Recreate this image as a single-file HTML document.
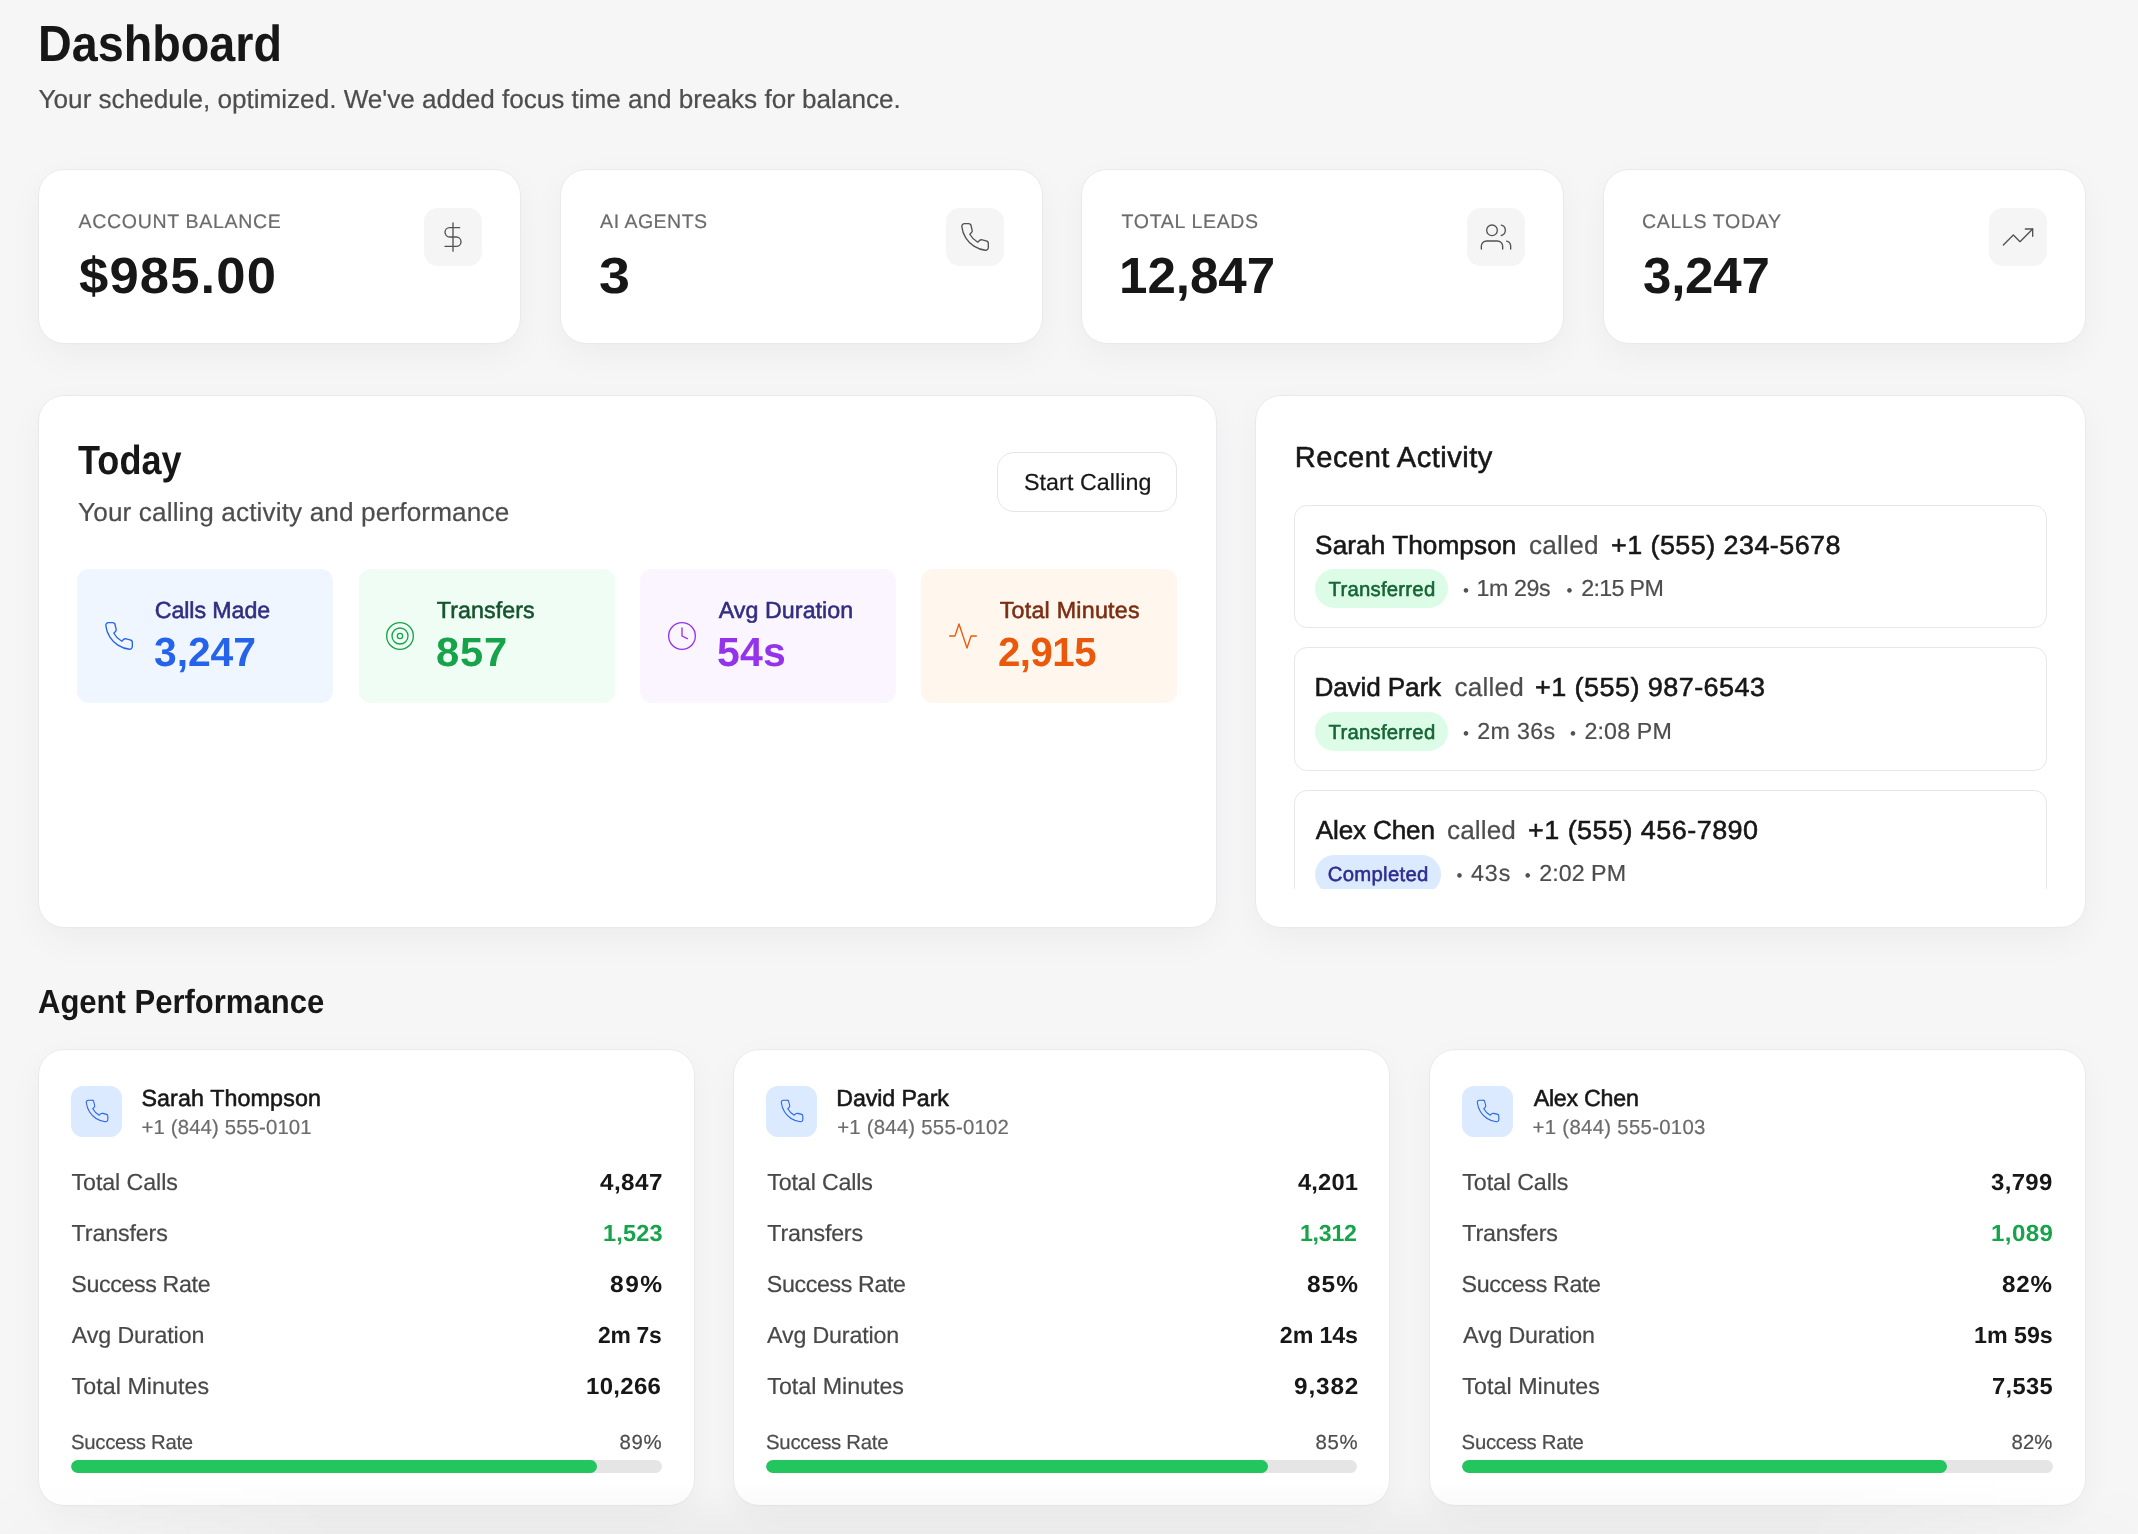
<!DOCTYPE html>
<html lang="en">
<head>
<meta charset="utf-8">
<title>Dashboard</title>
<style>
*{box-sizing:border-box;margin:0;padding:0}
html,body{width:2138px;height:1534px;overflow:hidden}
body{will-change:transform;text-rendering:geometricPrecision;position:relative;background:#f6f6f6;color:#171717;font-family:"Liberation Sans",Arial,sans-serif}
section,div,svg,.t{position:absolute}
.t{display:block;white-space:nowrap;line-height:1;font-weight:400;transform-origin:0 50%;-webkit-text-stroke:.2px currentColor}
.md{-webkit-text-stroke:.55px currentColor}
.b{font-weight:700;-webkit-text-stroke:0}
.f48{font-size:50.74px}.f38{font-size:40.69px}.f32{font-size:33.61px}.f28{font-size:29.07px}
.f25{font-size:26.16px}.f22{font-size:23.25px}.f19{font-size:20.35px}.f18{font-size:19.55px}
.dot{font-size:17px;color:#525252;-webkit-text-stroke:0}
.g4{color:#484848}.g5{color:#4d4d4d}.g6{color:#6b6b6b}.gr{color:#16a34a}
svg{fill:none;stroke:currentColor;stroke-width:1;stroke-linecap:round;stroke-linejoin:round;overflow:visible}
.card{background:#fff;border:1px solid #e9e9eb;border-radius:26px;box-shadow:0 1px 2px rgba(0,0,0,.015),0 12px 36px rgba(0,0,0,.038)}
.ib{border-radius:14px;background:#f5f5f5;color:#525252}
.btn{border:1px solid #e5e5e5;border-radius:17px;background:#fff}
.mini{border-radius:12px}
.m1{background:#eff6ff;color:#2563eb}.m1 .ml{color:#312e81}
.m2{background:#f0fdf4;color:#16a34a}.m2 .ml{color:#14532d}
.m3{background:#faf5ff;color:#9333ea}.m3 .ml{color:#312e81}
.m4{background:#fff7ed;color:#ea580c}.m4 .ml{color:#7c2d12}
.list{overflow:hidden}
.item{border:1px solid #e7e7e9;border-radius:13px;background:#fff}
.badge{border-radius:20px}
.bg{background:#dcfce7;color:#166534}
.bb{background:#dbeafe;color:#2f2c8f}
.ab{border-radius:12px;background:#dbeafe;color:#2563eb}
.bar{border-radius:7px;background:#e5e5e5;overflow:hidden}
.bar i{display:block;height:100%;border-radius:7px;background:#22c55e}
.fade{left:0;top:1480px;width:2138px;height:54px;background:linear-gradient(rgba(0,0,0,0),rgba(0,0,0,.04));-webkit-mask-image:linear-gradient(90deg,rgba(0,0,0,.15),#000 16%,#000 84%,rgba(0,0,0,.15));mask-image:linear-gradient(90deg,rgba(0,0,0,.15),#000 16%,#000 84%,rgba(0,0,0,.15))}
</style>
</head>
<body>
<h1 class="t f48 b" style="left:37.56px;top:19px;transform:scaleX(0.921);">Dashboard</h1>
<p class="t f25 g5" style="left:38.59px;top:86px;letter-spacing:-.03px;">Your schedule, optimized. We've added focus time and breaks for balance.</p>
<section class="card" style="left:38px;top:169px;width:483px;height:175px;">
  <span class="t f18 g6" style="left:39.49px;top:43px;letter-spacing:.68px;">ACCOUNT BALANCE</span>
  <span class="t f48 b" style="left:40px;top:81px;letter-spacing:1.09px;transform:scaleX(1.037);">$985.00</span>
  <div class="ib" style="left:385px;top:38px;width:58px;height:58px;">
    <svg style="left:13px;top:13px;width:32px;height:32px" viewBox="0 0 24 24"><line x1="12" y1="1.4" x2="12" y2="22.6"/><path d="M17 5H9.5a3.5 3.5 0 0 0 0 7h5a3.5 3.5 0 0 1 0 7H6"/></svg>
  </div>
</section>
<section class="card" style="left:560px;top:169px;width:483px;height:175px;">
  <span class="t f18 g6" style="left:39.11px;top:43px;letter-spacing:.49px;">AI AGENTS</span>
  <span class="t f48 b" style="left:37.5px;top:81px;transform:scaleX(1.099);">3</span>
  <div class="ib" style="left:385px;top:38px;width:58px;height:58px;">
    <svg style="left:13px;top:13px;width:32px;height:32px" viewBox="0 0 24 24"><path d="M22 16.92v3a2 2 0 0 1-2.18 2 19.79 19.79 0 0 1-8.63-3.07 19.5 19.5 0 0 1-6-6 19.79 19.79 0 0 1-3.07-8.67A2 2 0 0 1 4.11 2h3a2 2 0 0 1 2 1.72 12.84 12.84 0 0 0 .7 2.81 2 2 0 0 1-.45 2.11L8.09 9.91a16 16 0 0 0 6 6l1.27-1.27a2 2 0 0 1 2.11-.45 12.84 12.84 0 0 0 2.81.7A2 2 0 0 1 22 16.92z"/></svg>
  </div>
</section>
<section class="card" style="left:1081px;top:169px;width:483px;height:175px;">
  <span class="t f18 g6" style="left:39.57px;top:43px;letter-spacing:.67px;">TOTAL LEADS</span>
  <span class="t f48 b" style="left:37.12px;top:81px;letter-spacing:-.06px;transform:scaleX(1.008);">12,847</span>
  <div class="ib" style="left:385px;top:38px;width:58px;height:58px;">
    <svg style="left:13px;top:13px;width:32px;height:32px" viewBox="0 0 24 24"><path d="M17 21v-2a4 4 0 0 0-4-4H5a4 4 0 0 0-4 4v2"/><circle cx="9" cy="7" r="4"/><path d="M23 21v-2a4 4 0 0 0-3-3.87"/><path d="M16 3.13a4 4 0 0 1 0 7.75"/></svg>
  </div>
</section>
<section class="card" style="left:1603px;top:169px;width:483px;height:175px;">
  <span class="t f18 g6" style="left:38px;top:43px;letter-spacing:.65px;">CALLS TODAY</span>
  <span class="t f48 b" style="left:38.98px;top:81px;letter-spacing:-.22px;transform:scaleX(1.006);">3,247</span>
  <div class="ib" style="left:385px;top:38px;width:58px;height:58px;">
    <svg style="left:13px;top:13px;width:32px;height:32px" viewBox="0 0 24 24"><polyline points="23 6 13.5 15.5 8.5 10.5 1 18"/><polyline points="17.5 6 23 6 23 11.5"/></svg>
  </div>
</section>
<section class="card" style="left:38px;top:395px;width:1179px;height:533px;">
  <h2 class="t f38 b" style="left:38.97px;top:44px;transform:scaleX(0.887);">Today</h2>
  <p class="t f25 g5" style="left:39.05px;top:103px;letter-spacing:.13px;">Your calling activity and performance</p>
  <div class="btn" style="left:958px;top:56px;width:180px;height:60px;">
    <span class="t f22" style="left:26.03px;top:18px;letter-spacing:.06px;">Start Calling</span>
  </div>
  <div class="mini m1" style="left:38px;top:173px;width:256px;height:134px;">
    <svg style="left:26.2px;top:51px;width:32px;height:32px" viewBox="0 0 24 24"><path d="M22 16.92v3a2 2 0 0 1-2.18 2 19.79 19.79 0 0 1-8.63-3.07 19.5 19.5 0 0 1-6-6 19.79 19.79 0 0 1-3.07-8.67A2 2 0 0 1 4.11 2h3a2 2 0 0 1 2 1.72 12.84 12.84 0 0 0 .7 2.81 2 2 0 0 1-.45 2.11L8.09 9.91a16 16 0 0 0 6 6l1.27-1.27a2 2 0 0 1 2.11-.45 12.84 12.84 0 0 0 2.81.7A2 2 0 0 1 22 16.92z"/></svg>
    <span class="t f22 md ml" style="left:77.79px;top:30px;letter-spacing:-.1px;">Calls Made</span>
    <span class="t f38 b" style="left:76.94px;top:63px;letter-spacing:-.07px;transform:scaleX(1.005);">3,247</span>
  </div>
  <div class="mini m2" style="left:320px;top:173px;width:256px;height:134px;">
    <svg style="left:25.1px;top:51px;width:32px;height:32px" viewBox="0 0 24 24"><circle cx="12" cy="12" r="10"/><circle cx="12" cy="12" r="6"/><circle cx="12" cy="12" r="2"/></svg>
    <span class="t f22 md ml" style="left:77.83px;top:30px;letter-spacing:.07px;">Transfers</span>
    <span class="t f38 b" style="left:76.65px;top:63px;letter-spacing:.79px;transform:scaleX(1.026);">857</span>
  </div>
  <div class="mini m3" style="left:601px;top:173px;width:256px;height:134px;">
    <svg style="left:26px;top:51px;width:32px;height:32px" viewBox="0 0 24 24"><circle cx="12" cy="12" r="10"/><polyline points="12 6 12 12 16 14"/></svg>
    <span class="t f22 md ml" style="left:78.72px;top:30px;letter-spacing:.05px;">Avg Duration</span>
    <span class="t f38 b" style="left:77.46px;top:63px;letter-spacing:.2px;transform:scaleX(1.008);">54s</span>
  </div>
  <div class="mini m4" style="left:882px;top:173px;width:256px;height:134px;">
    <svg style="left:26px;top:51px;width:32px;height:32px" viewBox="0 0 24 24"><polyline points="22 12 18 12 15 21 9 3 6 12 2 12"/></svg>
    <span class="t f22 md ml" style="left:78.63px;top:30px;letter-spacing:.25px;">Total Minutes</span>
    <span class="t f38 b" style="left:77.05px;top:63px;letter-spacing:-.54px;transform:scaleX(0.989);">2,915</span>
  </div>
</section>
<section class="card" style="left:1255px;top:395px;width:831px;height:533px;">
  <h2 class="t f28 md" style="left:38.86px;top:48px;letter-spacing:.49px;">Recent Activity</h2>
  <div class="list" style="left:38px;top:109px;width:753px;height:383.5px;">
    <div class="item" style="left:0px;top:0px;width:753px;height:123px;">
      <span class="t f25 md" style="left:20.12px;top:26px;letter-spacing:.08px;">Sarah Thompson</span>
      <span class="t f25 g5" style="left:233.98px;top:26px;letter-spacing:.23px;">called</span>
      <span class="t f25 md" style="left:315.82px;top:26px;letter-spacing:.43px;transform:scaleX(1.03);">+1 (555) 234-5678</span>
      <div class="badge bg" style="left:20px;top:63px;width:132.8px;height:39px;">
        <span class="t f19 md" style="left:13.62px;top:11px;letter-spacing:.22px;">Transferred</span>
      </div>
      <span class="t dot" style="left:168.12px;top:76px;">•</span>
      <span class="t f22 g5" style="left:181.44px;top:71px;letter-spacing:-.41px;">1m 29s</span>
      <span class="t dot" style="left:271.57px;top:76px;">•</span>
      <span class="t f22 g5" style="left:286.37px;top:71px;letter-spacing:-.69px;">2:15 PM</span>
    </div>
    <div class="item" style="left:0px;top:142px;width:753px;height:124px;">
      <span class="t f25 md" style="left:19.46px;top:26px;letter-spacing:-.14px;">David Park</span>
      <span class="t f25 g5" style="left:159.59px;top:26px;letter-spacing:.16px;">called</span>
      <span class="t f25 md" style="left:240.39px;top:26px;letter-spacing:.42px;transform:scaleX(1.033);">+1 (555) 987-6543</span>
      <div class="badge bg" style="left:20px;top:64px;width:132.8px;height:39px;">
        <span class="t f19 md" style="left:13.62px;top:11px;letter-spacing:.22px;">Transferred</span>
      </div>
      <span class="t dot" style="left:168.12px;top:77px;">•</span>
      <span class="t f22 g5" style="left:182.19px;top:72px;letter-spacing:.32px;">2m 36s</span>
      <span class="t dot" style="left:275.01px;top:77px;">•</span>
      <span class="t f22 g5" style="left:289.46px;top:72px;letter-spacing:.14px;">2:08 PM</span>
    </div>
    <div class="item" style="left:0px;top:285px;width:753px;height:123px;">
      <span class="t f25 md" style="left:20.77px;top:26px;letter-spacing:-.18px;">Alex Chen</span>
      <span class="t f25 g5" style="left:152.07px;top:26px;letter-spacing:.08px;">called</span>
      <span class="t f25 md" style="left:233.11px;top:26px;letter-spacing:.45px;transform:scaleX(1.031);">+1 (555) 456-7890</span>
      <div class="badge bb" style="left:20px;top:64px;width:125.7px;height:39px;">
        <span class="t f19 md" style="left:12.68px;top:10px;letter-spacing:.29px;">Completed</span>
      </div>
      <span class="t dot" style="left:161.57px;top:76px;">•</span>
      <span class="t f22 g5" style="left:175.94px;top:71px;letter-spacing:.98px;">43s</span>
      <span class="t dot" style="left:229.84px;top:76px;">•</span>
      <span class="t f22 g5" style="left:244.37px;top:71px;letter-spacing:.01px;">2:02 PM</span>
    </div>
  </div>
</section>
<h2 class="t f32 b" style="left:38px;top:986px;transform:scaleX(0.923);">Agent Performance</h2>
<section class="card" style="left:38px;top:1049px;width:657px;height:457px;">
  <div class="ab" style="left:32px;top:36px;width:51px;height:51px;">
    <svg style="left:13px;top:11.5px;width:26px;height:26px" viewBox="0 0 24 24"><path d="M22 16.92v3a2 2 0 0 1-2.18 2 19.79 19.79 0 0 1-8.63-3.07 19.5 19.5 0 0 1-6-6 19.79 19.79 0 0 1-3.07-8.67A2 2 0 0 1 4.11 2h3a2 2 0 0 1 2 1.72 12.84 12.84 0 0 0 .7 2.81 2 2 0 0 1-.45 2.11L8.09 9.91a16 16 0 0 0 6 6l1.27-1.27a2 2 0 0 1 2.11-.45 12.84 12.84 0 0 0 2.81.7A2 2 0 0 1 22 16.92z"/></svg>
  </div>
  <span class="t f22 md" style="left:102.38px;top:37px;letter-spacing:.12px;">Sarah Thompson</span>
  <span class="t f19 g6" style="left:102.58px;top:68px;letter-spacing:.13px;">+1 (844) 555-0101</span>
  <span class="t f22 g4" style="left:32.59px;top:121px;letter-spacing:-.1px;">Total Calls</span>
  <span class="t f22 b" style="left:560.84px;top:121px;letter-spacing:.43px;transform:scaleX(1.043);">4,847</span>
  <span class="t f22 g4" style="left:32.59px;top:172px;letter-spacing:-.14px;">Transfers</span>
  <span class="t f22 b gr" style="left:563.62px;top:172px;letter-spacing:.19px;transform:scaleX(1.012);">1,523</span>
  <span class="t f22 g4" style="left:32.26px;top:223px;letter-spacing:-.37px;">Success Rate</span>
  <span class="t f22 b" style="left:571.2px;top:223px;letter-spacing:1.39px;transform:scaleX(1.058);">89%</span>
  <span class="t f22 g4" style="left:32.84px;top:274px;letter-spacing:-.13px;">Avg Duration</span>
  <span class="t f22 b" style="left:559.02px;top:274px;letter-spacing:-.32px;transform:scaleX(0.984);">2m 7s</span>
  <span class="t f22 g4" style="left:32.59px;top:325px;letter-spacing:.05px;">Total Minutes</span>
  <span class="t f22 b" style="left:547.46px;top:325px;letter-spacing:.29px;transform:scaleX(1.032);">10,266</span>
  <span class="t f19 g5" style="left:32.08px;top:383px;letter-spacing:-.32px;">Success Rate</span>
  <span class="t f19 g5" style="left:580.48px;top:383px;letter-spacing:.67px;">89%</span>
  <div class="bar" style="left:32px;top:410px;width:591px;height:13px;"><i style="width:89%"></i></div>
</section>
<section class="card" style="left:733px;top:1049px;width:657px;height:457px;">
  <div class="ab" style="left:32px;top:36px;width:51px;height:51px;">
    <svg style="left:13px;top:11.5px;width:26px;height:26px" viewBox="0 0 24 24"><path d="M22 16.92v3a2 2 0 0 1-2.18 2 19.79 19.79 0 0 1-8.63-3.07 19.5 19.5 0 0 1-6-6 19.79 19.79 0 0 1-3.07-8.67A2 2 0 0 1 4.11 2h3a2 2 0 0 1 2 1.72 12.84 12.84 0 0 0 .7 2.81 2 2 0 0 1-.45 2.11L8.09 9.91a16 16 0 0 0 6 6l1.27-1.27a2 2 0 0 1 2.11-.45 12.84 12.84 0 0 0 2.81.7A2 2 0 0 1 22 16.92z"/></svg>
  </div>
  <span class="t f22 md" style="left:102.35px;top:37px;letter-spacing:-.13px;">David Park</span>
  <span class="t f19 g6" style="left:103.14px;top:68px;letter-spacing:.24px;">+1 (844) 555-0102</span>
  <span class="t f22 g4" style="left:33.36px;top:121px;letter-spacing:-.17px;">Total Calls</span>
  <span class="t f22 b" style="left:564.23px;top:121px;letter-spacing:.15px;transform:scaleX(1.021);">4,201</span>
  <span class="t f22 g4" style="left:33.36px;top:172px;letter-spacing:-.21px;">Transfers</span>
  <span class="t f22 b gr" style="left:566.42px;top:172px;letter-spacing:-.25px;transform:scaleX(0.995);">1,312</span>
  <span class="t f22 g4" style="left:32.75px;top:223px;letter-spacing:-.38px;">Success Rate</span>
  <span class="t f22 b" style="left:572.65px;top:223px;letter-spacing:.95px;transform:scaleX(1.053);">85%</span>
  <span class="t f22 g4" style="left:33.03px;top:274px;letter-spacing:-.17px;">Avg Duration</span>
  <span class="t f22 b" style="left:545.87px;top:274px;letter-spacing:-.16px;">2m 14s</span>
  <span class="t f22 g4" style="left:33.36px;top:325px;letter-spacing:-.03px;">Total Minutes</span>
  <span class="t f22 b" style="left:560.12px;top:325px;letter-spacing:.8px;transform:scaleX(1.049);">9,382</span>
  <span class="t f19 g5" style="left:32.07px;top:383px;letter-spacing:-.28px;">Success Rate</span>
  <span class="t f19 g5" style="left:581.6px;top:383px;letter-spacing:.6px;">85%</span>
  <div class="bar" style="left:32px;top:410px;width:591px;height:13px;"><i style="width:85%"></i></div>
</section>
<section class="card" style="left:1429px;top:1049px;width:657px;height:457px;">
  <div class="ab" style="left:32px;top:36px;width:51px;height:51px;">
    <svg style="left:13px;top:11.5px;width:26px;height:26px" viewBox="0 0 24 24"><path d="M22 16.92v3a2 2 0 0 1-2.18 2 19.79 19.79 0 0 1-8.63-3.07 19.5 19.5 0 0 1-6-6 19.79 19.79 0 0 1-3.07-8.67A2 2 0 0 1 4.11 2h3a2 2 0 0 1 2 1.72 12.84 12.84 0 0 0 .7 2.81 2 2 0 0 1-.45 2.11L8.09 9.91a16 16 0 0 0 6 6l1.27-1.27a2 2 0 0 1 2.11-.45 12.84 12.84 0 0 0 2.81.7A2 2 0 0 1 22 16.92z"/></svg>
  </div>
  <span class="t f22 md" style="left:103.66px;top:37px;letter-spacing:-.26px;">Alex Chen</span>
  <span class="t f19 g6" style="left:102.61px;top:68px;letter-spacing:.3px;">+1 (844) 555-0103</span>
  <span class="t f22 g4" style="left:32.33px;top:121px;letter-spacing:-.12px;">Total Calls</span>
  <span class="t f22 b" style="left:561.16px;top:121px;letter-spacing:.31px;transform:scaleX(1.032);">3,799</span>
  <span class="t f22 g4" style="left:32.33px;top:172px;letter-spacing:-.22px;">Transfers</span>
  <span class="t f22 b gr" style="left:560.59px;top:172px;letter-spacing:.38px;transform:scaleX(1.037);">1,089</span>
  <span class="t f22 g4" style="left:31.57px;top:223px;letter-spacing:-.36px;">Success Rate</span>
  <span class="t f22 b" style="left:571.99px;top:223px;letter-spacing:.78px;transform:scaleX(1.041);">82%</span>
  <span class="t f22 g4" style="left:33.05px;top:274px;letter-spacing:-.18px;">Avg Duration</span>
  <span class="t f22 b" style="left:544.04px;top:274px;letter-spacing:-.03px;">1m 59s</span>
  <span class="t f22 g4" style="left:32.33px;top:325px;letter-spacing:.05px;">Total Minutes</span>
  <span class="t f22 b" style="left:561.8px;top:325px;letter-spacing:.3px;transform:scaleX(1.02);">7,535</span>
  <span class="t f19 g5" style="left:31.62px;top:383px;letter-spacing:-.3px;">Success Rate</span>
  <span class="t f19 g5" style="left:581.62px;top:383px;letter-spacing:-.04px;">82%</span>
  <div class="bar" style="left:32px;top:410px;width:591px;height:13px;"><i style="width:82%"></i></div>
</section>
<div class="fade"></div>
</body>
</html>
